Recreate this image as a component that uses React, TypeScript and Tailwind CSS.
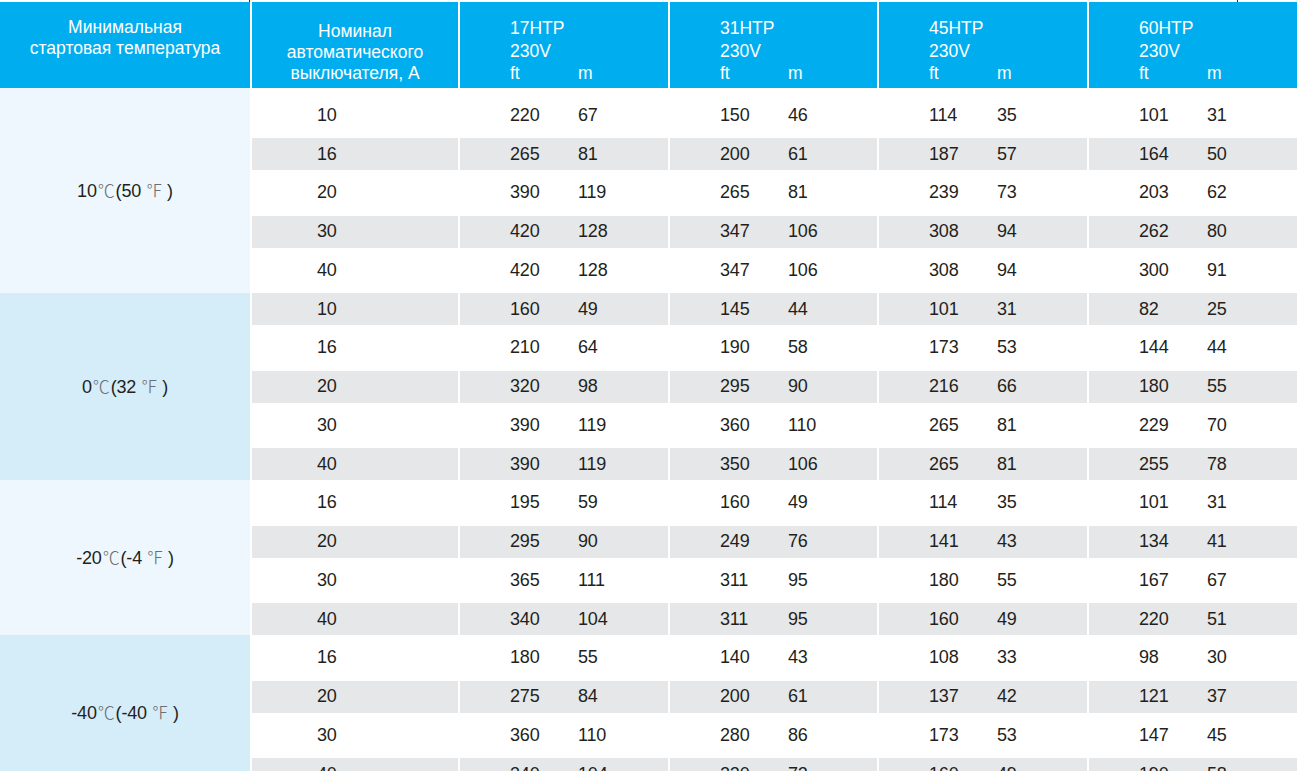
import React from 'react';

type Pair = [string, string];

interface Row {
  amp: string;
  vals: Pair[];
}

interface Group {
  t: string;
  f: string;
  bg: string;
  firstGray: boolean;
  rows: Row[];
}

const groups: Group[] = [
  {
    t: '10',
    f: '50',
    bg: 'bg-[#eef7fd]',
    firstGray: false,
    rows: [
      { amp: '10', vals: [['220', '67'], ['150', '46'], ['114', '35'], ['101', '31']] },
      { amp: '16', vals: [['265', '81'], ['200', '61'], ['187', '57'], ['164', '50']] },
      { amp: '20', vals: [['390', '119'], ['265', '81'], ['239', '73'], ['203', '62']] },
      { amp: '30', vals: [['420', '128'], ['347', '106'], ['308', '94'], ['262', '80']] },
      { amp: '40', vals: [['420', '128'], ['347', '106'], ['308', '94'], ['300', '91']] },
    ],
  },
  {
    t: '0',
    f: '32',
    bg: 'bg-[#d5ecf9]',
    firstGray: true,
    rows: [
      { amp: '10', vals: [['160', '49'], ['145', '44'], ['101', '31'], ['82', '25']] },
      { amp: '16', vals: [['210', '64'], ['190', '58'], ['173', '53'], ['144', '44']] },
      { amp: '20', vals: [['320', '98'], ['295', '90'], ['216', '66'], ['180', '55']] },
      { amp: '30', vals: [['390', '119'], ['360', '110'], ['265', '81'], ['229', '70']] },
      { amp: '40', vals: [['390', '119'], ['350', '106'], ['265', '81'], ['255', '78']] },
    ],
  },
  {
    t: '-20',
    f: '-4',
    bg: 'bg-[#eef7fd]',
    firstGray: false,
    rows: [
      { amp: '16', vals: [['195', '59'], ['160', '49'], ['114', '35'], ['101', '31']] },
      { amp: '20', vals: [['295', '90'], ['249', '76'], ['141', '43'], ['134', '41']] },
      { amp: '30', vals: [['365', '111'], ['311', '95'], ['180', '55'], ['167', '67']] },
      { amp: '40', vals: [['340', '104'], ['311', '95'], ['160', '49'], ['220', '51']] },
    ],
  },
  {
    t: '-40',
    f: '-40',
    bg: 'bg-[#d5ecf9]',
    firstGray: false,
    rows: [
      { amp: '16', vals: [['180', '55'], ['140', '43'], ['108', '33'], ['98', '30']] },
      { amp: '20', vals: [['275', '84'], ['200', '61'], ['137', '42'], ['121', '37']] },
      { amp: '30', vals: [['360', '110'], ['280', '86'], ['173', '53'], ['147', '45']] },
      { amp: '40', vals: [['340', '104'], ['220', '72'], ['160', '49'], ['190', '58']] },
    ],
  },
];

const models = ['17HTP', '31HTP', '45HTP', '60HTP'];
const colW = ['w-[208px]', 'w-[207px]', 'w-[208px]', 'w-[208px]'];

const Deg = ({ c }: { c: string }) => (
  <span className="font-['Noto_Sans_CJK_SC',sans-serif] font-light text-[#6d6e71] text-[17px] mx-[1px]">{c}</span>
);

const DataRow = ({ row, gray, first }: { row: Row; gray: boolean; first: boolean }) => {
  const h = first ? 'h-[50px] pt-[5px]' : gray ? 'h-[32px]' : 'h-[45.5px]';
  const bg = gray ? 'bg-[#e6e7e8]' : 'bg-white';
  return (
    <div className={`flex gap-[2px] ${h}`}>
      <div className={`w-[206px] flex items-center pl-[65px] ${bg}`}>{row.amp}</div>
      {row.vals.map(([ft, m], i) => (
        <div key={i} className={`${colW[i]} flex items-center pl-[50px] ${bg}`}>
          <span className="w-[68px]">{ft}</span>
          <span>{m}</span>
        </div>
      ))}
    </div>
  );
};

export default function App() {
  let idx = 0;
  return (
    <div className="w-[1297px] h-[771px] overflow-hidden bg-white text-[#231f20] text-[18px] tracking-[-0.01em] font-['Liberation_Sans',Arial,sans-serif]">
      {/* top strip */}
      <div className="h-[2px] flex">
        <div className="ml-[249px] w-px h-[2px] bg-[#333]" />
        <div className="ml-[987px] w-px h-[2px] bg-[#333]" />
      </div>

      {/* header */}
      <div className="flex gap-[2px] h-[86px] text-white text-[17.5px] tracking-normal">
        <div className="w-[250px] bg-[#00aeef] pt-[15px] text-center leading-[21px]">
          <div>Минимальная</div>
          <div>стартовая температура</div>
        </div>
        <div className="w-[206px] bg-[#00aeef] pt-[19px] text-center leading-[21px]">
          <div>Номинал</div>
          <div>автоматического</div>
          <div>выключателя, А</div>
        </div>
        {models.map((m, i) => (
          <div key={m} className={`${colW[i]} bg-[#00aeef] pt-[15px] pl-[50px] leading-[22.5px]`}>
            <div>{m}</div>
            <div>230V</div>
            <div className="flex">
              <span className="w-[68px]">ft</span>
              <span>m</span>
            </div>
          </div>
        ))}
      </div>

      {/* body */}
      {groups.map((g) => (
        <div key={g.t} className="flex gap-[2px]">
          <div className={`w-[250px] ${g.bg} flex items-center justify-center`}>
            <span>
              {g.t}
              <Deg c="℃" />({g.f}
              <Deg c=" ℉ " />)
            </span>
          </div>
          <div className="flex flex-col">
            {g.rows.map((r, i) => {
              const gray = g.firstGray ? i % 2 === 0 : i % 2 === 1;
              const first = idx === 0;
              idx++;
              return <DataRow key={i} row={r} gray={gray} first={first} />;
            })}
          </div>
        </div>
      ))}
    </div>
  );
}
